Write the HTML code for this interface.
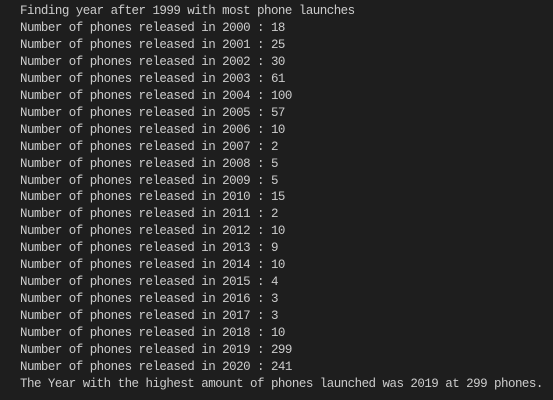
<!DOCTYPE html>
<html><head><style>
html,body{margin:0;padding:0;background:#1e1e1e;width:553px;height:400px;overflow:hidden}
pre{margin:0;padding:3px 0 0 20px;font-family:"Liberation Mono",monospace;font-size:12.5px;letter-spacing:-0.53px;line-height:16.95px;color:#cccccc}
</style></head><body><pre>Finding year after 1999 with most phone launches
Number of phones released in 2000 : 18
Number of phones released in 2001 : 25
Number of phones released in 2002 : 30
Number of phones released in 2003 : 61
Number of phones released in 2004 : 100
Number of phones released in 2005 : 57
Number of phones released in 2006 : 10
Number of phones released in 2007 : 2
Number of phones released in 2008 : 5
Number of phones released in 2009 : 5
Number of phones released in 2010 : 15
Number of phones released in 2011 : 2
Number of phones released in 2012 : 10
Number of phones released in 2013 : 9
Number of phones released in 2014 : 10
Number of phones released in 2015 : 4
Number of phones released in 2016 : 3
Number of phones released in 2017 : 3
Number of phones released in 2018 : 10
Number of phones released in 2019 : 299
Number of phones released in 2020 : 241
The Year with the highest amount of phones launched was 2019 at 299 phones.</pre></body></html>
